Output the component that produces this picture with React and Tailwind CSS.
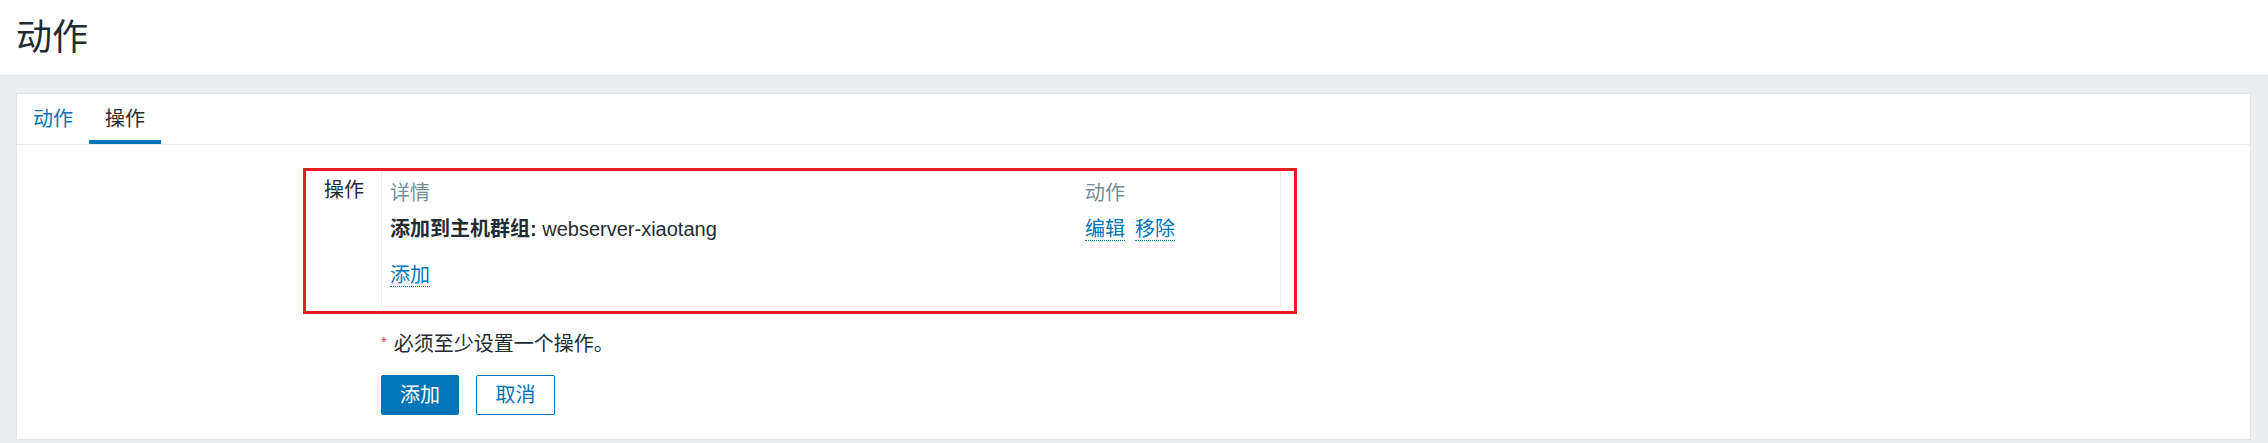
const font = { fontFamily: '"Liberation Sans", "Noto Sans CJK SC", sans-serif' };

const Tab = ({ label, active }) => (
  <div
    className={
      "flex h-[50px] items-center px-[16px] text-[20px] " +
      (active ? "text-[#1f2c33] shadow-[inset_0_-4px_0_#0275b8]" : "text-[#0275b8]")
    }
  >
    {label}
  </div>
);

const DottedLink = ({ children }) => (
  <span className="cursor-pointer border-b border-dotted border-[#0275b8] leading-[22px] text-[#0275b8]">
    {children}
  </span>
);

const App = () => {
  return (
    <div className="h-screen overflow-hidden bg-[#ebeef0]" style={font}>
      {/* Page header */}
      <div className="flex h-[76px] items-center border-b border-[#dfe4e7] bg-white px-4">
        <h1 className="text-[36px] font-normal leading-none text-[#1f2c33]">动作</h1>
      </div>

      <div className="pl-4 pr-[17px] pt-[17px]">
        <div className="border border-[#dfe4e7] bg-white">
          {/* Tabs */}
          <div className="flex border-b border-[#ebeef0]">
            <Tab label="动作" />
            <Tab label="操作" active />
          </div>

          <div className="pb-6 pt-[23px] text-[20px] text-[#1f2c33]">
            {/* Operations row (highlighted) */}
            <div className="ml-[286px] flex w-[994px] border-[3px] border-[#e81c23] pb-[4px] pr-[13px]">
              <div className="w-[75px] pr-[17px] pt-[6px] text-right leading-[26px]">操作</div>
              <div className="w-[900px] border border-[#ebeef0]">
                <div className="flex h-[42px] items-center px-2 text-[#768d99]">
                  <div className="w-[695px]">详情</div>
                  <div>动作</div>
                </div>
                <div className="flex h-[30px] items-center px-2">
                  <div className="w-[695px]">
                    <span className="font-bold">添加到主机群组:</span> webserver-xiaotang
                  </div>
                  <div className="flex gap-[10px]">
                    <DottedLink>编辑</DottedLink>
                    <DottedLink>移除</DottedLink>
                  </div>
                </div>
                <div className="flex h-[62px] items-center px-2">
                  <DottedLink>添加</DottedLink>
                </div>
              </div>
            </div>

            {/* Required note */}
            <div className="ml-[364px] mt-[19px] flex items-start leading-[22px]">
              <span className="mr-[7px] text-[15px] leading-[18px] text-[#e33734]">*</span>
              <span>必须至少设置一个操作。</span>
            </div>

            {/* Buttons */}
            <div className="ml-[364px] mt-[20px] flex gap-[17px]">
              <button className="h-10 w-[78px] rounded-[2px] bg-[#0275b8] text-[20px] text-white">
                添加
              </button>
              <button className="h-10 w-[79px] rounded-[2px] border border-[#0275b8] bg-white text-[20px] text-[#0275b8]">
                取消
              </button>
            </div>
          </div>
        </div>
      </div>
    </div>
  );
};

export default App;
